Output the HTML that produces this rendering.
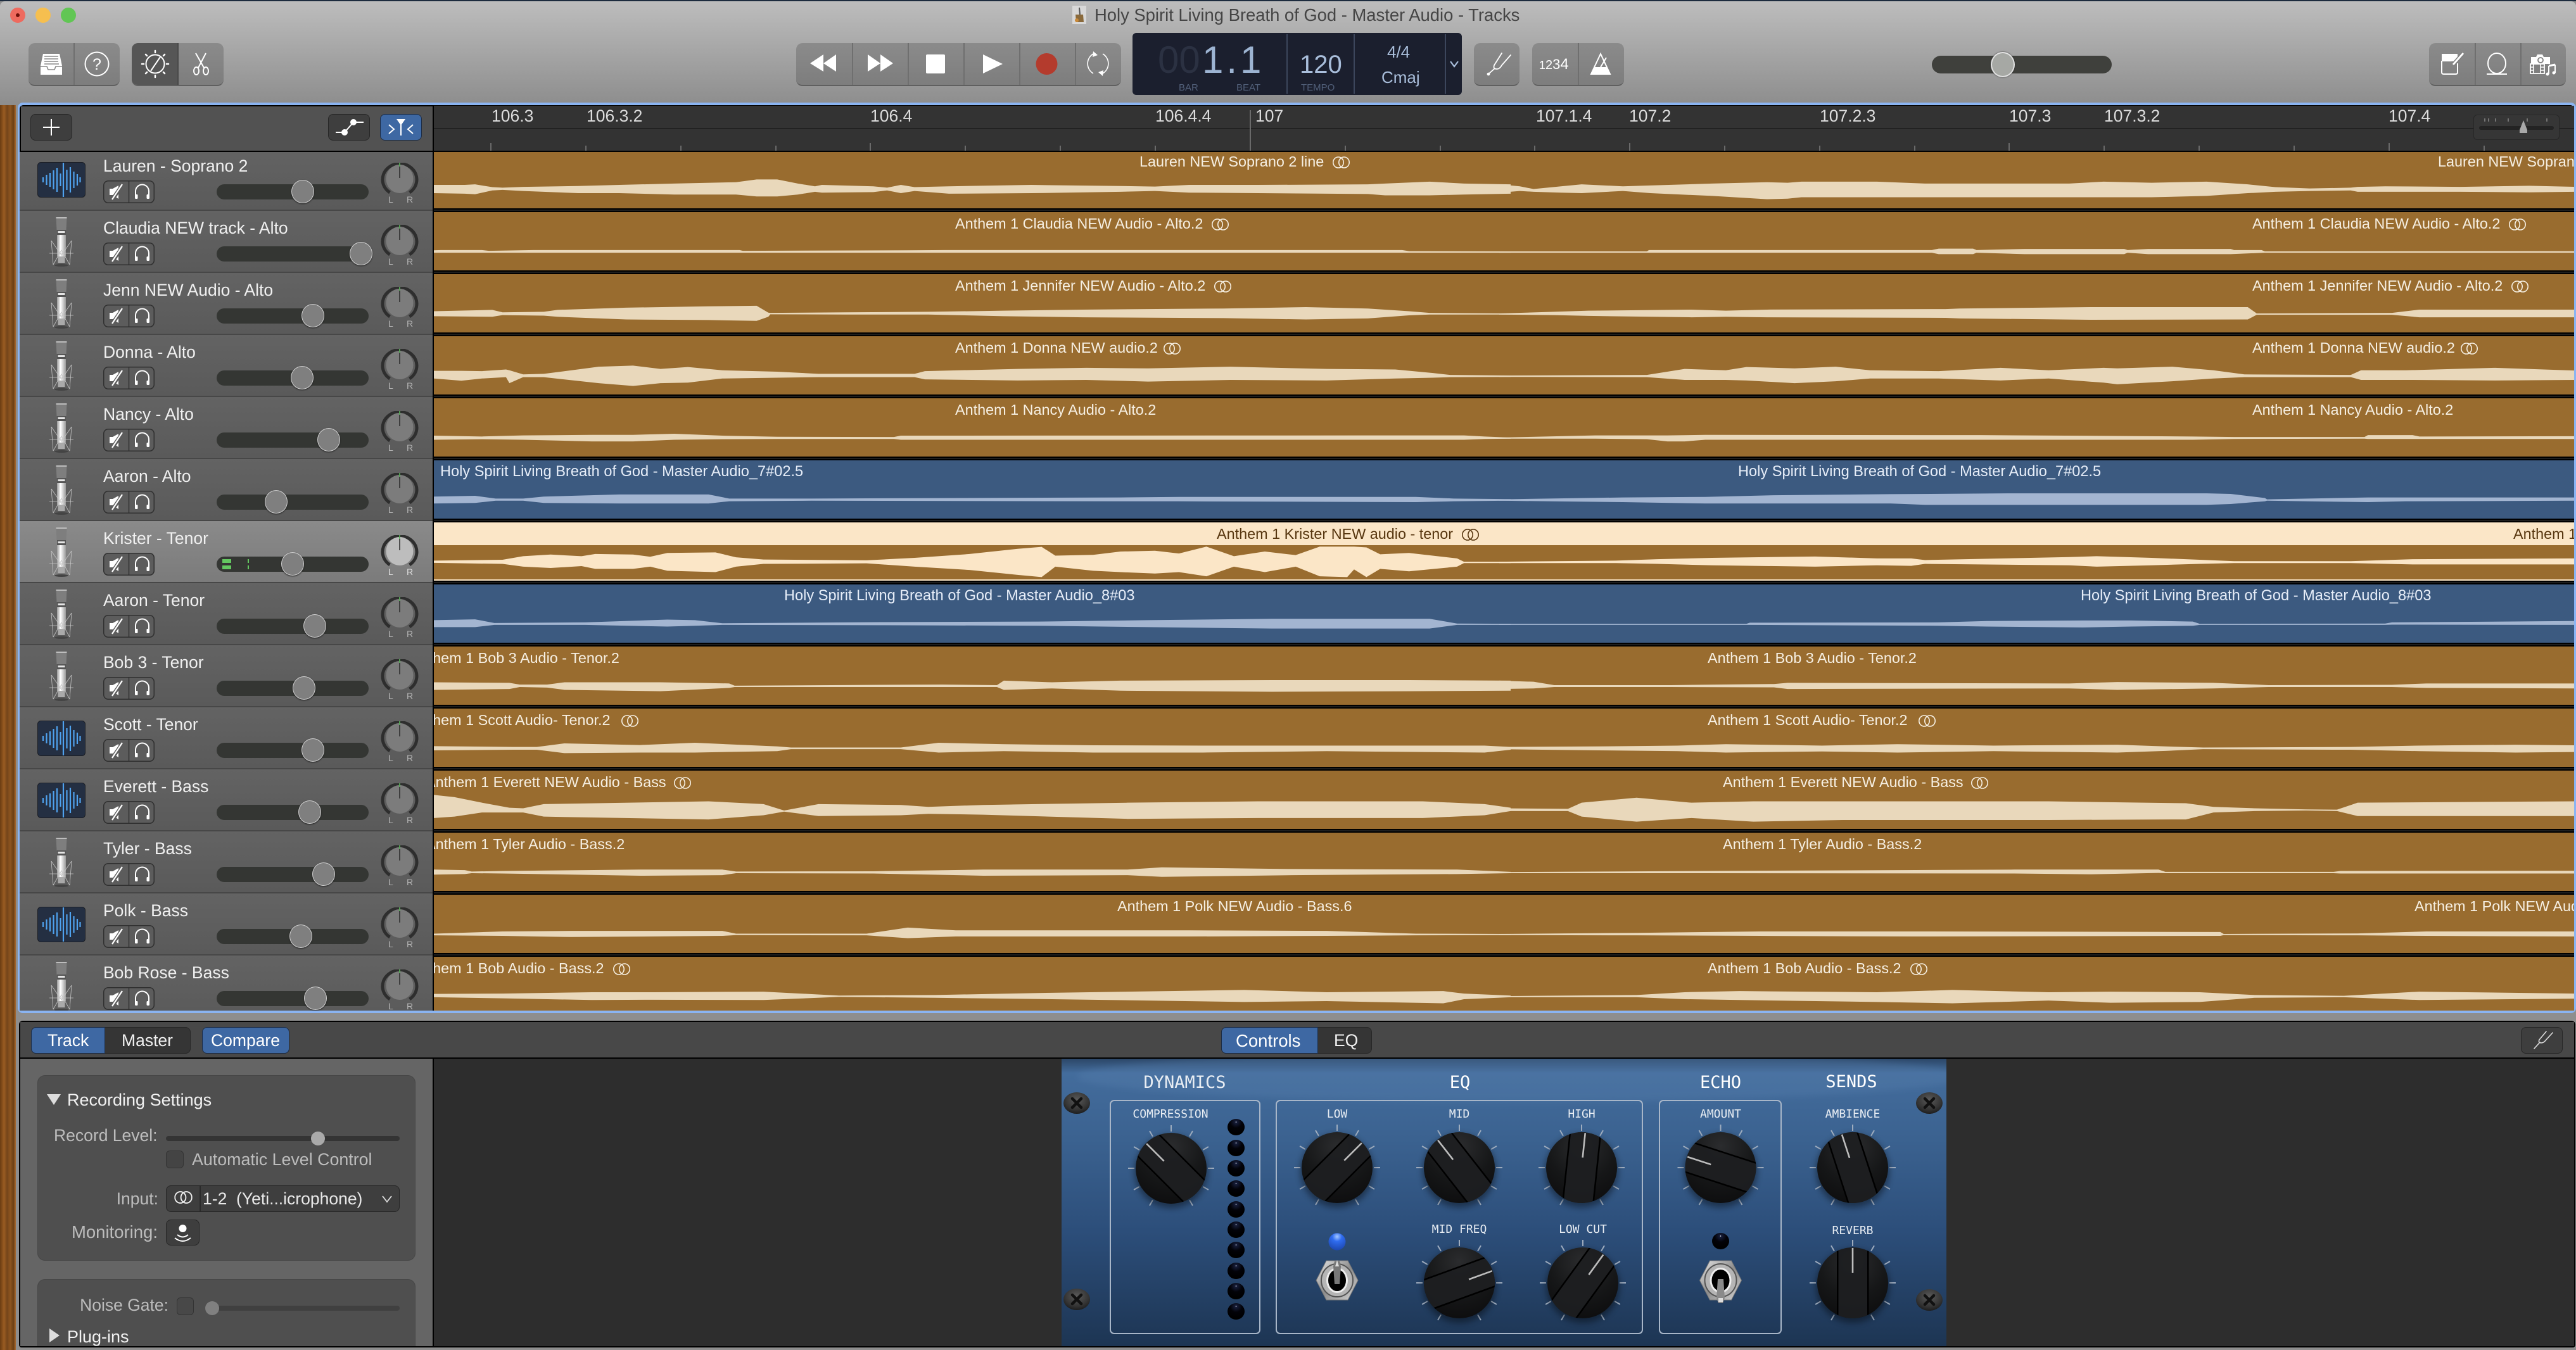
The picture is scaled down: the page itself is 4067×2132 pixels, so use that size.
<!DOCTYPE html>
<html><head><meta charset="utf-8"><title>GarageBand</title>
<style>
html,body{margin:0;padding:0;background:#8e8e8e;width:4067px;height:2132px;overflow:hidden}
body{position:relative;font-family:"Liberation Sans",sans-serif;color:#eee}
.a{position:absolute}
.t{position:absolute;white-space:nowrap;line-height:1}
.grp{position:absolute;top:68px;height:66px;background:linear-gradient(#8b8b8b,#7d7d7d);border-radius:10px;border-bottom:2px solid #5f5f5f;overflow:hidden}
.dv{position:absolute;top:0;bottom:0;width:2px;background:#6f6f6f}
.dk{position:absolute;background:#3e3e3e;border:1.5px solid #272727;border-radius:8px;box-sizing:border-box}
.bl{position:absolute;background:#3e68a3;border:1.5px solid #1d2c44;border-radius:8px;box-sizing:border-box}
#rows{position:absolute;left:31px;top:240px;width:652px;height:1356px;overflow:hidden}
.r{position:absolute;left:0;width:652px;height:96px;border-bottom:2px solid #474747;background:linear-gradient(#636363,#5a5a5a)}
.r.s{background:linear-gradient(#8a8a8a,#7b7b7b)}
.n{position:absolute;left:132px;top:14px;font-size:26.5px;line-height:1;white-space:nowrap;color:#f0f0f0}
.sl{position:absolute;left:311px;top:56px;width:240px;height:24px;border-radius:12px;background:#343633}
.th{position:absolute;top:49px;width:36px;height:37px;box-sizing:border-box;border-radius:50%;background:#7f7f7f;border:1.5px solid #cfcfcf;box-shadow:0 1px 2px #222}
.ms{position:absolute;left:132px;top:50px;width:81px;height:36px}
.pn{position:absolute;left:570px;top:22px;width:60px;height:76px}
.ic{position:absolute}
#clips{position:absolute;left:685px;top:240px;width:3379px;height:1356px;overflow:hidden;background:repeating-linear-gradient(#000 0,#000 91px,#1e1e1e 91px,#1e1e1e 93px,#000 93px,#000 98px)}
.c{position:absolute;left:0;width:3379px;height:92px;background:#996c2f;overflow:hidden}
.c.b{background:#3c5a80}
.c.k{background:#996c2f}
.l{position:absolute;top:7px;font-size:23.4px;line-height:1;white-space:nowrap;color:#f6efe2}
.c.b .l{color:#e6edf8;font-size:23.6px}
.c.k .l{color:#57360f}
.l svg{width:27px;height:19px;vertical-align:-3px;margin-left:14px;fill:none;stroke:currentColor;stroke-width:1.6}
.ru{position:absolute;top:170px;font-size:26.5px;line-height:1;color:#dcdcdc;white-space:nowrap}
.g{color:#bcbcbc}
</style></head><body>
<svg width="0" height="0" style="position:absolute"><defs>
<linearGradient id="sil" x1="0" x2="1" y1="0" y2="0"><stop offset="0" stop-color="#999"/><stop offset=".4" stop-color="#fff"/><stop offset="1" stop-color="#999"/></linearGradient>
<symbol id="mic" viewBox="0 0 40 78">
<path d="M11.500 0H28.500L27.500 20H12.500Z" fill="#7e7e7e"/><path d="M11.500 0H28.500V2H11.500Z" fill="#bdbdbd"/>
<rect x="13" y="20" width="14" height="8" fill="#555"/><rect x="14.500" y="22" width="11" height="3" fill="#e5e5e5"/>
<rect x="13" y="28" width="14" height="34" fill="url(#sil)"/>
<path d="M4 37L20 60 36 37M4 37L7 75M36 37L33 75M7 75L20 52 33 75M1 57H39" stroke="#c4c4c4" stroke-width=".8" fill="none"/>
<rect x="14.500" y="62" width="11" height="10" fill="#aaa"/><ellipse cx="20" cy="76" rx="11" ry="2" fill="#444"/>
</symbol>
<symbol id="wav" viewBox="0 0 76 56">
<rect x=".5" y=".5" width="75" height="55" rx="5" fill="#242f42" stroke="#1c1f26"/>
<path d="M9 24V32M14.500 20V36M20 17V39M25.500 13V43M31 9V47M36.500 18V38M41 1V55M46.500 12V44M52 8V48M57.500 15V41M63 19V37M67.500 24V32" stroke="#4fa2ee" stroke-width="2.200" fill="none"/>
</symbol>
<symbol id="msb" viewBox="0 0 81 36">
<rect x=".75" y=".75" width="79.500" height="34.500" rx="7" fill="#5c5c5c" stroke="#303030" stroke-width="1.500"/><path d="M40.500 1V35" stroke="#303030" stroke-width="1.500"/>
<path d="M10 13H15L24 8V29L15 23H10Z" fill="#fff"/><path d="M31 6L13 32" stroke="#5c5c5c" stroke-width="6"/><path d="M30 6L14 30" stroke="#fff" stroke-width="2.200"/>
<path d="M51 24V17A10.500 10.500 0 0 1 72 17V24" fill="none" stroke="#fff" stroke-width="2"/><rect x="50" y="22" width="4.500" height="7" rx="1.500" fill="#fff"/><rect x="68.500" y="22" width="4.500" height="7" rx="1.500" fill="#fff"/>
</symbol>
<symbol id="pan" viewBox="0 0 60 76">
<path d="M14.500 47A27 25 0 1 1 45.500 47" fill="none" stroke="#2e2e2e" stroke-width="5"/>
<ellipse cx="30" cy="25.500" rx="21.500" ry="22.500" fill="#7c7c7c"/>
<path d="M30 3V24" stroke="#2a2a2a" stroke-width="1.500"/><path d="M30 0V6" stroke="#5bc05b" stroke-width="1.500"/>
<text x="12" y="63" font-size="14" fill="#b3b3b3" font-family="Liberation Sans">L</text><text x="41" y="63" font-size="14" fill="#b3b3b3" font-family="Liberation Sans">R</text>
</symbol>
<symbol id="pans" viewBox="0 0 60 76">
<path d="M14.500 47A27 25 0 1 1 45.500 47" fill="none" stroke="#2e2e2e" stroke-width="5"/>
<ellipse cx="30" cy="25.500" rx="21.500" ry="22.500" fill="#bdbdbd"/>
<path d="M30 3V24" stroke="#2a2a2a" stroke-width="1.500"/><path d="M30 0V6" stroke="#5bc05b" stroke-width="1.500"/>
<text x="12" y="63" font-size="14" fill="#dedede" font-family="Liberation Sans">L</text><text x="41" y="63" font-size="14" fill="#dedede" font-family="Liberation Sans">R</text>
</symbol>
<symbol id="st" viewBox="0 0 27 19"><ellipse cx="9" cy="9.500" rx="8.200" ry="8.500"/><ellipse cx="18" cy="9.500" rx="8.200" ry="8.500"/></symbol>
</defs></svg>

<!-- title bar -->
<div class="a" style="left:0;top:0;width:4067px;height:2px;background:#1c2b3e"></div>
<div class="a" style="left:0;top:2px;width:4067px;height:164px;background:linear-gradient(#bdbdbd,#8d8d8d);border-radius:8px 8px 0 0"></div>
<div class="a" style="left:16px;top:12px;width:24px;height:24px;border-radius:50%;background:#ee6a5e"></div>
<div class="a" style="left:25px;top:21px;width:6px;height:6px;border-radius:50%;background:#6e0f08"></div>
<div class="a" style="left:56px;top:12px;width:24px;height:24px;border-radius:50%;background:#f6bf4f"></div>
<div class="a" style="left:96px;top:12px;width:24px;height:24px;border-radius:50%;background:#61c654"></div>
<svg class="a" style="left:1693px;top:9px" width="22" height="29" viewBox="0 0 22 29"><rect width="22" height="29" fill="#d8d8d8"/><path d="M11 3L12 14" stroke="#555" stroke-width="2"/><path d="M5 14H17L18 26H6Z" fill="#8a6a3c"/><circle cx="7" cy="23" r="3" fill="#c98a3a"/></svg>
<div class="t" style="left:1728px;top:10px;font-size:27.4px;color:#454545">Holy Spirit Living Breath of God - Master Audio - Tracks</div>

<!-- toolbar left -->
<div class="grp" style="left:45px;width:144px"><div class="dv" style="left:71px"></div></div>
<div class="grp" style="left:208px;width:145px"><div class="a" style="left:0;top:0;width:73px;height:66px;background:#565656"></div><div class="dv" style="left:72px;background:#4a4a4a"></div></div>
<svg class="a" style="left:45px;top:68px" width="310" height="66" viewBox="45 68 310 66" fill="none" stroke="#fff">
<path d="M68 85H94L98 104V118H64V104Z" fill="#fff" stroke="none"/><path d="M70 89H92M70 93H92M70 97H92M70 101H93" stroke="#8a8a8a" stroke-width="1.600"/><path d="M64 105H74L76 110H86L88 105H98" stroke="#8a8a8a" stroke-width="1.600"/>
<circle cx="153" cy="101" r="18.500" stroke-width="2"/><text x="153" y="110" font-size="25" text-anchor="middle" fill="#fff" stroke="none" font-family="Liberation Sans">?</text>
<circle cx="245" cy="101" r="14.500" stroke-width="2"/><path d="M253 90L238 112" stroke-width="2"/>
<path d="M245 80V83M245 119V122M224 101H227M263 101H266M230 86L232 88M258 88L260 86M230 116L232 114M258 114L260 116" stroke-width="2.500" stroke-linecap="round"/>
<path d="M309 84L322 107M325 84L313 107" stroke-width="2"/><ellipse cx="310" cy="112" rx="4" ry="6" stroke-width="2"/><ellipse cx="325" cy="112" rx="4" ry="6" stroke-width="2"/>
</svg>

<!-- transport -->
<div class="grp" style="left:1257px;width:513px">
<div class="dv" style="left:88px"></div><div class="dv" style="left:176px"></div><div class="dv" style="left:264px"></div><div class="dv" style="left:352px"></div><div class="dv" style="left:440px"></div></div>
<svg class="a" style="left:1257px;top:68px" width="513" height="66" viewBox="1257 68 513 66">
<path d="M1279 100L1300 86V113ZM1300 100L1320 86V113Z" fill="#fff"/>
<path d="M1410 100L1390 86V113ZM1390 100L1370 86V113Z" fill="#fff"/>
<rect x="1462" y="86" width="30" height="30" rx="2" fill="#fff"/>
<path d="M1552 86L1583 101L1552 116Z" fill="#fff"/>
<circle cx="1652.500" cy="101" r="17" fill="#b43b2d"/>
<path d="M1726 85A18 18 0 0 0 1726 116M1741 116A18 18 0 0 0 1741 85" fill="none" stroke="#fff" stroke-width="1.600"/><path d="M1726 81L1733 87L1725 90ZM1741 120L1734 114L1742 111Z" fill="#fff"/>
</svg>

<!-- LCD -->
<div class="a" style="left:1788px;top:52px;width:520px;height:98px;background:#1b1f2e;border-radius:6px"></div>
<div class="a" style="left:2031px;top:54px;width:2px;height:94px;background:#3c465c"></div>
<div class="a" style="left:2137px;top:54px;width:2px;height:94px;background:#3c465c"></div>
<div class="a" style="left:2281px;top:54px;width:2px;height:94px;background:#3c465c"></div>
<div class="t" style="left:1828px;top:65px;font-size:60px;color:#2b3142">00</div>
<div class="t" style="left:1898px;top:65px;font-size:60px;color:#9db4d2;letter-spacing:5px">1.1</div>
<div class="t" style="left:1861px;top:131px;font-size:15px;color:#52607a">BAR</div>
<div class="t" style="left:1952px;top:131px;font-size:15px;color:#52607a">BEAT</div>
<div class="t" style="left:2054px;top:131px;font-size:15px;color:#52607a">TEMPO</div>
<div class="t" style="left:2052px;top:82px;font-size:40px;color:#a9bedb">120</div>
<div class="t" style="left:2190px;top:69px;font-size:26px;color:#a9bedb">4/4</div>
<div class="t" style="left:2181px;top:109px;font-size:26px;color:#a9bedb">Cmaj</div>
<svg class="a" style="left:2288px;top:95px" width="16" height="12" viewBox="0 0 16 12"><path d="M2 2L8 10L14 2" fill="none" stroke="#a9bedb" stroke-width="2.200"/></svg>

<div class="grp" style="left:2327px;width:72px"></div>
<svg class="a" style="left:2327px;top:68px" width="72" height="66" viewBox="2327 68 72 66" fill="none" stroke="#fff" stroke-width="1.800"><path d="M2371 84L2359 103Q2357 109 2363 109Q2368 109 2371 103L2385 87M2360 108L2351 116" stroke-linecap="round"/><circle cx="2350" cy="117" r="1.500" fill="#fff"/></svg>
<div class="grp" style="left:2419px;width:145px"><div class="dv" style="left:72px"></div></div>
<div class="t" style="left:2430px;top:90px;color:#fff;white-space:nowrap"><span style="font-size:18px">1</span><span style="font-size:20px">2</span><span style="font-size:22px">3</span><span style="font-size:24px">4</span></div>
<svg class="a" style="left:2492px;top:68px" width="72" height="66" viewBox="2492 68 72 66"><path d="M2527 85L2512 117H2542Z" fill="none" stroke="#fff" stroke-width="2"/><path d="M2517 106H2537L2543 118H2511Z" fill="#fff"/><path d="M2527 106L2536 91" stroke="#fff" stroke-width="2"/></svg>

<!-- view slider -->
<div class="a" style="left:3050px;top:88px;width:284px;height:28px;border-radius:14px;background:#3f403c"></div>
<div class="a" style="left:3143px;top:82px;width:38px;height:40px;box-sizing:border-box;border-radius:50%;background:#a6a8a4;border:2px solid #e3e3e3;box-shadow:0 0 2px #333"></div>

<div class="grp" style="left:3835px;width:216px"><div class="dv" style="left:72px"></div><div class="dv" style="left:144px"></div></div>
<svg class="a" style="left:3835px;top:68px" width="216" height="66" viewBox="3835 68 216 66" fill="none" stroke="#fff" stroke-width="2">
<path d="M3855 85H3880V96L3868 97L3855 97Z" fill="#fff" stroke="none"/><path d="M3855 96V114Q3855 117 3858 117H3877Q3880 117 3880 114V100"/><path d="M3889 84L3873 102" stroke="#7f7f7f" stroke-width="6"/><path d="M3889 84L3873 102" stroke-width="3"/>
<ellipse cx="3942" cy="100" rx="14" ry="16"/><path d="M3926 117H3958"/>
<path d="M3996 90H4004L4006 86H4014L4016 90H4026V101H3996Z" fill="#fff" stroke="none"/><circle cx="4011" cy="95" r="4" stroke="#7f7f7f" stroke-width="1.800"/><rect x="3995" y="101" width="22" height="15" fill="#7f7f7f" stroke-width="1.800"/><path d="M4000 101V116M4011 101V116M3995 106H4000M3995 111H4000M4011 106H4017M4011 111H4017" stroke-width="1.600"/><path d="M4024 104V117M4034 102V115" stroke-width="2"/><path d="M4024 104L4034 102" stroke-width="3"/><circle cx="4022" cy="117" r="2.500" fill="#fff" stroke="none"/><circle cx="4032" cy="115" r="2.500" fill="#fff" stroke="none"/>
</svg>

<!-- wood + frame -->
<div class="a" style="left:0;top:166px;width:25px;height:1966px;background:linear-gradient(90deg,#6a3c12,#9a5c22 25%,#74451a 45%,#8e5520 65%,#6b3f14 85%,#a86a30)"></div>
<div class="a" style="left:28px;top:162px;width:4039px;height:1438px;background:#8ab4f2;border-radius:8px"></div>
<div class="a" style="left:31px;top:166px;width:4033px;height:1430px;background:#000;border-radius:6px 6px 0 0"></div>

<!-- left header -->
<div class="a" style="left:33px;top:168px;width:650px;height:70px;background:#525252"></div>
<div class="dk" style="left:48px;top:180px;width:66px;height:42px"></div>
<svg class="a" style="left:48px;top:180px" width="66" height="42" viewBox="0 0 66 42"><path d="M33 8V34M20 21H46" stroke="#fff" stroke-width="2"/></svg>
<div class="dk" style="left:518px;top:180px;width:66px;height:42px"></div>
<svg class="a" style="left:518px;top:180px" width="66" height="42" viewBox="0 0 66 42" fill="#fff"><path d="M12 29H26L40 13H56" stroke="#fff" stroke-width="2" fill="none"/><circle cx="26" cy="29" r="5"/><circle cx="40" cy="13" r="5"/></svg>
<div class="bl" style="left:600px;top:180px;width:66px;height:42px"></div>
<svg class="a" style="left:600px;top:180px" width="66" height="42" viewBox="0 0 66 42" fill="none" stroke="#fff" stroke-width="2"><path d="M26 8H40L33 18Z" fill="#fff" stroke="none"/><path d="M33 16V34M14 17L22 24L14 31M52 17L44 24L52 31"/></svg>

<!-- ruler -->
<div class="a" style="left:685px;top:167px;width:3379px;height:71px;background:#333"></div>
<div class="a" style="left:685px;top:202px;width:3379px;height:2px;background:#222"></div>
<svg class="a" style="left:685px;top:167px" width="3379" height="71" viewBox="685 167 3379 71" fill="none" stroke="#6a6a6a" stroke-width="2">
<path d="M775 226V238M925 230V238M1075 230V238M1225 230V238M1374 226V238M1524 230V238M1674 230V238M1824 230V238M1974 174V238M2124 230V238M2274 230V238M2423 230V238M2573 226V238M2723 230V238M2873 230V238M3023 230V238M3172 226V238M3322 230V238M3472 230V238M3622 230V238M3772 226V238M3922 230V238"/>
</svg>
<div class="ru" style="left:776px">106.3</div><div class="ru" style="left:926px">106.3.2</div><div class="ru" style="left:1374px">106.4</div><div class="ru" style="left:1824px">106.4.4</div><div class="ru" style="left:1982px">107</div><div class="ru" style="left:2425px">107.1.4</div><div class="ru" style="left:2572px">107.2</div><div class="ru" style="left:2873px">107.2.3</div><div class="ru" style="left:3172px">107.3</div><div class="ru" style="left:3322px">107.3.2</div><div class="ru" style="left:3771px">107.4</div>
<div class="a" style="left:3905px;top:181px;width:136px;height:40px;background:#363636;border:1.5px solid #272727;border-radius:6px;box-sizing:border-box"></div>
<svg class="a" style="left:3905px;top:181px" width="136" height="40" viewBox="0 0 136 40"><rect x="9" y="18" width="118" height="6" rx="3" fill="#232323"/><path d="M18 6V11M24 6V11M35 6V11M55 6V11M85 6V11M116 6V11" stroke="#888" stroke-width="1.500"/><path d="M79 9L85 24V29H73V24Z" fill="#a8a8a8"/></svg>

<!-- tracks -->
<div id="rows">
<div class="r" style="top:-5px"><svg class="ic" style="left:28px;top:21px" width="76" height="56"><use href="#wav"/></svg><div class="n">Lauren - Soprano 2</div><svg class="ms"><use href="#msb"/></svg><div class="sl"></div><div class="th" style="left:429px"></div><svg class="pn"><use href="#pan"/></svg></div>
<div class="r" style="top:93px"><svg class="ic" style="left:46px;top:10px" width="40" height="78"><use href="#mic"/></svg><div class="n">Claudia NEW track - Alto</div><svg class="ms"><use href="#msb"/></svg><div class="sl"></div><div class="th" style="left:521px"></div><svg class="pn"><use href="#pan"/></svg></div>
<div class="r" style="top:191px"><svg class="ic" style="left:46px;top:10px" width="40" height="78"><use href="#mic"/></svg><div class="n">Jenn NEW Audio - Alto</div><svg class="ms"><use href="#msb"/></svg><div class="sl"></div><div class="th" style="left:445px"></div><svg class="pn"><use href="#pan"/></svg></div>
<div class="r" style="top:289px"><svg class="ic" style="left:46px;top:10px" width="40" height="78"><use href="#mic"/></svg><div class="n">Donna - Alto</div><svg class="ms"><use href="#msb"/></svg><div class="sl"></div><div class="th" style="left:428px"></div><svg class="pn"><use href="#pan"/></svg></div>
<div class="r" style="top:387px"><svg class="ic" style="left:46px;top:10px" width="40" height="78"><use href="#mic"/></svg><div class="n">Nancy - Alto</div><svg class="ms"><use href="#msb"/></svg><div class="sl"></div><div class="th" style="left:470px"></div><svg class="pn"><use href="#pan"/></svg></div>
<div class="r" style="top:485px"><svg class="ic" style="left:46px;top:10px" width="40" height="78"><use href="#mic"/></svg><div class="n">Aaron - Alto</div><svg class="ms"><use href="#msb"/></svg><div class="sl"></div><div class="th" style="left:387px"></div><svg class="pn"><use href="#pan"/></svg></div>
<div class="r s" style="top:583px"><svg class="ic" style="left:46px;top:10px" width="40" height="78"><use href="#mic"/></svg><div class="n">Krister - Tenor</div><svg class="ms"><use href="#msb"/></svg><div class="sl"></div><div class="a" style="left:320px;top:60px;width:14px;height:6px;background:#63c760"></div><div class="a" style="left:320px;top:70px;width:14px;height:6px;background:#63c760"></div><div class="a" style="left:360px;top:60px;width:2px;height:6px;background:#63c760"></div><div class="a" style="left:360px;top:70px;width:2px;height:6px;background:#63c760"></div><div class="th" style="left:413px"></div><svg class="pn"><use href="#pans"/></svg></div>
<div class="r" style="top:681px"><svg class="ic" style="left:46px;top:10px" width="40" height="78"><use href="#mic"/></svg><div class="n">Aaron - Tenor</div><svg class="ms"><use href="#msb"/></svg><div class="sl"></div><div class="th" style="left:448px"></div><svg class="pn"><use href="#pan"/></svg></div>
<div class="r" style="top:779px"><svg class="ic" style="left:46px;top:10px" width="40" height="78"><use href="#mic"/></svg><div class="n">Bob 3 - Tenor</div><svg class="ms"><use href="#msb"/></svg><div class="sl"></div><div class="th" style="left:431px"></div><svg class="pn"><use href="#pan"/></svg></div>
<div class="r" style="top:877px"><svg class="ic" style="left:28px;top:21px" width="76" height="56"><use href="#wav"/></svg><div class="n">Scott - Tenor</div><svg class="ms"><use href="#msb"/></svg><div class="sl"></div><div class="th" style="left:445px"></div><svg class="pn"><use href="#pan"/></svg></div>
<div class="r" style="top:975px"><svg class="ic" style="left:28px;top:21px" width="76" height="56"><use href="#wav"/></svg><div class="n">Everett - Bass</div><svg class="ms"><use href="#msb"/></svg><div class="sl"></div><div class="th" style="left:440px"></div><svg class="pn"><use href="#pan"/></svg></div>
<div class="r" style="top:1073px"><svg class="ic" style="left:46px;top:10px" width="40" height="78"><use href="#mic"/></svg><div class="n">Tyler - Bass</div><svg class="ms"><use href="#msb"/></svg><div class="sl"></div><div class="th" style="left:462px"></div><svg class="pn"><use href="#pan"/></svg></div>
<div class="r" style="top:1171px"><svg class="ic" style="left:28px;top:21px" width="76" height="56"><use href="#wav"/></svg><div class="n">Polk - Bass</div><svg class="ms"><use href="#msb"/></svg><div class="sl"></div><div class="th" style="left:426px"></div><svg class="pn"><use href="#pan"/></svg></div>
<div class="r" style="top:1269px"><svg class="ic" style="left:46px;top:10px" width="40" height="78"><use href="#mic"/></svg><div class="n">Bob Rose - Bass</div><svg class="ms"><use href="#msb"/></svg><div class="sl"></div><div class="th" style="left:449px"></div><svg class="pn"><use href="#pan"/></svg></div>
</div>

<div id="clips">
<div class="c" style="top:0;height:89px"><div class="l" style="left:1114px;top:4px">Lauren NEW Soprano 2 line<svg viewBox="0 0 27 19"><use href="#st"/></svg></div><div class="l" style="left:3164px;top:4px">Lauren NEW Soprano 2 line</div></div>
<div class="c" style="top:95px"><div class="l" style="left:823px">Anthem 1 Claudia NEW Audio - Alto.2<svg viewBox="0 0 27 19"><use href="#st"/></svg></div><div class="l" style="left:2871px">Anthem 1 Claudia NEW Audio - Alto.2<svg viewBox="0 0 27 19"><use href="#st"/></svg></div></div>
<div class="c" style="top:193px"><div class="l" style="left:823px">Anthem 1 Jennifer NEW Audio - Alto.2<svg viewBox="0 0 27 19"><use href="#st"/></svg></div><div class="l" style="left:2871px">Anthem 1 Jennifer NEW Audio - Alto.2<svg viewBox="0 0 27 19"><use href="#st"/></svg></div></div>
<div class="c" style="top:291px"><div class="l" style="left:823px">Anthem 1 Donna NEW audio.2<svg viewBox="0 0 27 19" style="margin-left:9px"><use href="#st"/></svg></div><div class="l" style="left:2871px">Anthem 1 Donna NEW audio.2<svg viewBox="0 0 27 19" style="margin-left:9px"><use href="#st"/></svg></div></div>
<div class="c" style="top:389px"><div class="l" style="left:823px">Anthem 1 Nancy Audio - Alto.2</div><div class="l" style="left:2871px">Anthem 1 Nancy Audio - Alto.2</div></div>
<div class="c b" style="top:487px"><div class="l" style="left:10px">Holy Spirit Living Breath of God - Master Audio_7#02.5</div><div class="l" style="left:2059px">Holy Spirit Living Breath of God - Master Audio_7#02.5</div></div>
<div class="c k" style="top:585px"><div class="a" style="left:0;top:0;width:3379px;height:36px;background:#fbe6c7"></div><div class="a" style="left:0;top:90px;width:3379px;height:2px;background:#fbe6c7"></div><div class="l" style="left:1236px">Anthem 1 Krister NEW audio - tenor<svg viewBox="0 0 27 19"><use href="#st"/></svg></div><div class="l" style="left:3283px">Anthem 1 Krister NEW audio - tenor</div></div>
<div class="c b" style="top:683px"><div class="l" style="left:553px">Holy Spirit Living Breath of God - Master Audio_8#03</div><div class="l" style="left:2600px">Holy Spirit Living Breath of God - Master Audio_8#03</div></div>
<div class="c" style="top:781px"><div class="l" style="left:-37px">Anthem 1 Bob 3 Audio - Tenor.2</div><div class="l" style="left:2011px">Anthem 1 Bob 3 Audio - Tenor.2</div></div>
<div class="c" style="top:879px"><div class="l" style="left:-37px">Anthem 1 Scott Audio- Tenor.2<svg viewBox="0 0 27 19" style="margin-left:17px"><use href="#st"/></svg></div><div class="l" style="left:2011px">Anthem 1 Scott Audio- Tenor.2<svg viewBox="0 0 27 19" style="margin-left:17px"><use href="#st"/></svg></div></div>
<div class="c" style="top:977px"><div class="l" style="left:-13px">Anthem 1 Everett NEW Audio - Bass<svg viewBox="0 0 27 19" style="margin-left:12px"><use href="#st"/></svg></div><div class="l" style="left:2035px">Anthem 1 Everett NEW Audio - Bass<svg viewBox="0 0 27 19" style="margin-left:12px"><use href="#st"/></svg></div></div>
<div class="c" style="top:1075px"><div class="l" style="left:-13px">Anthem 1 Tyler Audio - Bass.2</div><div class="l" style="left:2035px">Anthem 1 Tyler Audio - Bass.2</div></div>
<div class="c" style="top:1173px"><div class="l" style="left:1079px">Anthem 1 Polk NEW Audio - Bass.6</div><div class="l" style="left:3127px">Anthem 1 Polk NEW Audio - Bass.6</div></div>
<div class="c" style="top:1271px;height:92px"><div class="l" style="left:-37px">Anthem 1 Bob Audio - Bass.2<svg viewBox="0 0 27 19"><use href="#st"/></svg></div><div class="l" style="left:2011px">Anthem 1 Bob Audio - Bass.2<svg viewBox="0 0 27 19"><use href="#st"/></svg></div></div>

<svg class="a" style="left:0;top:0" width="3379" height="1356" viewBox="685 240 3379 1356">
<g transform="translate(685 240) scale(1.0842 .4337)" fill="#e9d8bb">
<path d="M0 120 45 120 60 118 85 128 100 130 130 127 210 124 270 120 350 115 440 110 470 100 500 100 530 115 555 125 565 120 640 125 660 130 680 120 700 128 750 125 870 120 1000 124 1050 126 1100 120 1200 120 1360 118 1385 115 1450 108 1500 115 1568 118 1568 152 1500 155 1450 158 1385 158 1360 153 1200 150 1100 148 1050 142 1000 145 870 150 750 152 700 142 680 150 660 140 640 146 565 148 555 145 530 155 500 162 470 162 440 155 350 155 270 150 210 150 130 142 100 138 85 140 60 154 45 152 0 150Z"/>
<path d="M0 358 10 357 70 357 80 360 145 357 445 357 450 360 690 358 745 357 1410 357 1420 361 1568 362 1568 367 0 367Z"/>
<path d="M0 580 85 575 100 584 160 582 180 575 280 567 400 562 470 560 487 585 490 586 600 584 720 582 830 578 945 574 1150 570 1270 565 1360 570 1420 580 1450 586 1568 588 1568 592 1450 592 1420 595 1360 606 1270 610 1150 605 945 602 830 598 720 592 600 592 490 591 487 600 470 615 400 612 280 610 180 600 160 596 100 594 85 600 0 598Z"/>
<path d="M0 797 40 797 70 798 105 792 110 795 130 810 160 808 240 782 290 778 330 790 370 783 420 795 500 800 560 808 700 808 715 798 850 790 950 786 1040 788 1160 782 1300 790 1400 792 1455 805 1480 812 1568 814 1568 819 1480 820 1455 822 1400 825 1300 832 1160 830 1040 836 950 830 850 832 715 828 700 820 560 820 500 822 420 825 370 840 330 842 290 852 240 842 160 820 130 820 110 842 105 820 70 825 40 833 0 825Z"/>
<path d="M0 1033 70 1036 130 1032 230 1030 290 1030 350 1026 420 1033 500 1037 670 1038 680 1033 1500 1032 1530 1036 1568 1040 1568 1044 1530 1045 1500 1048 680 1048 670 1045 500 1045 420 1046 350 1048 290 1054 230 1054 130 1048 70 1046 0 1048Z"/>
<path fill="#a3b5d1" d="M0 1255 60 1252 90 1262 130 1262 160 1255 270 1247 400 1247 430 1262 550 1262 1000 1258 1085 1256 1430 1256 1485 1262 1568 1264 1568 1270 1485 1272 1430 1275 1085 1272 1000 1272 550 1270 430 1272 400 1280 270 1280 160 1278 130 1270 90 1270 60 1278 0 1280Z"/>
<path fill="#fbe6c7" d="M0 1488 100 1485 130 1472 170 1466 215 1472 235 1464 290 1466 315 1474 340 1460 410 1458 440 1476 480 1484 630 1487 700 1478 780 1464 850 1445 885 1438 905 1470 960 1467 1000 1455 1050 1452 1085 1462 1125 1437 1165 1472 1210 1455 1255 1468 1290 1437 1340 1437 1358 1440 1378 1465 1420 1460 1490 1480 1500 1492 1568 1492 1568 1497 1500 1497 1490 1510 1420 1527 1378 1518 1358 1548 1340 1520 1330 1548 1290 1545 1255 1510 1210 1530 1165 1510 1125 1545 1085 1530 1050 1535 1000 1530 960 1525 905 1510 885 1548 850 1540 780 1522 700 1510 630 1498 480 1500 440 1510 410 1530 340 1525 315 1510 290 1518 235 1518 215 1508 170 1515 130 1510 100 1500 0 1496Z"/>
</g>
<g transform="translate(2367 240) scale(1.0842 .4337)" fill="#e9d8bb">
<path d="M0 118 30 125 50 135 90 125 120 118 180 125 220 122 310 115 390 110 420 112 440 108 550 108 620 115 830 115 880 108 950 112 1030 108 1090 118 1130 128 1180 133 1240 130 1250 127 1290 125 1400 127 1500 123 1568 127 1568 145 1500 147 1400 145 1290 145 1250 145 1240 140 1180 142 1130 145 1090 150 1030 160 950 165 880 165 620 165 550 165 440 165 420 170 390 172 310 160 220 150 180 142 120 150 90 148 50 145 30 142 0 148Z"/>
<path d="M0 362 215 362 218 357 630 357 640 352 690 352 695 357 765 353 910 353 915 357 945 353 1065 353 1070 357 1110 357 1115 362 1568 361 1568 367 1115 367 1065 372 945 372 915 367 910 372 765 372 695 367 690 372 640 372 630 367 0 367Z"/>
<path d="M0 588 80 582 130 578 280 574 330 578 390 574 650 572 670 570 860 565 1090 565 1103 588 1300 586 1340 574 1568 574 1568 602 1340 602 1300 593 1103 593 1090 610 860 611 670 606 650 604 390 602 330 600 280 602 130 597 80 594 0 592Z"/>
<path d="M0 814 215 812 270 790 330 795 360 783 430 788 490 782 540 795 640 798 730 786 800 795 880 786 900 788 980 782 1040 795 1085 810 1240 812 1255 795 1320 795 1450 786 1568 796 1568 830 1450 832 1320 830 1255 830 1240 820 1085 820 1040 825 980 835 900 846 880 840 800 825 730 832 640 825 540 825 490 835 430 842 360 832 330 830 270 830 215 820 0 819Z"/>
<path d="M0 1040 140 1032 215 1032 245 1032 300 1030 700 1031 1010 1036 1070 1038 1260 1038 1265 1031 1330 1031 1340 1036 1568 1035 1568 1045 1340 1045 1330 1045 1265 1045 1260 1044 1070 1045 1010 1048 700 1048 300 1048 270 1054 245 1054 215 1046 140 1044 0 1044Z"/>
<path fill="#a3b5d1" d="M0 1265 180 1258 300 1256 400 1250 570 1246 740 1243 1030 1243 1065 1245 1115 1260 1118 1265 1265 1258 1320 1258 1568 1258 1568 1270 1320 1272 1265 1275 1118 1270 1115 1272 1065 1282 1030 1285 620 1285 570 1280 300 1280 180 1275 0 1270Z"/>
<path fill="#fbe6c7" d="M0 1492 170 1488 230 1483 310 1478 460 1473 550 1480 600 1480 620 1486 830 1475 870 1472 950 1478 1020 1485 1070 1490 1240 1490 1330 1483 1568 1480 1568 1502 1330 1502 1240 1497 1070 1497 1020 1500 950 1505 870 1510 830 1505 620 1500 600 1507 550 1505 460 1510 310 1505 230 1500 170 1497 0 1497Z"/>
</g>
<g transform="translate(685 920) scale(1.0842 .4401)" fill="#e9d8bb">
<path fill="#a3b5d1" d="M0 135 60 132 88 145 220 143 340 133 380 135 420 146 650 142 880 140 1040 135 1220 130 1450 130 1490 147 1568 148 1568 152 1490 152 1450 165 1280 165 1220 165 1040 160 880 155 650 153 420 152 380 155 340 158 220 152 88 152 60 160 0 160Z"/>
<path d="M0 358 110 360 125 366 165 366 190 358 330 358 430 362 438 370 740 366 820 368 830 352 900 358 1000 352 1220 350 1420 350 1568 352 1568 388 1420 390 1220 392 1000 388 900 380 830 385 820 375 740 375 438 375 430 378 330 390 190 385 165 377 125 375 110 382 0 385Z"/>
<path d="M0 587 115 590 150 590 190 577 300 583 380 575 500 588 520 592 680 592 735 575 830 580 960 584 1120 585 1300 585 1530 585 1568 590 1568 600 1530 610 1300 605 1120 610 960 610 830 605 735 610 680 598 520 598 500 605 380 610 300 610 190 612 150 600 115 600 0 602Z"/>
<path d="M0 762 30 770 70 790 110 808 130 810 160 795 400 785 480 795 510 818 560 795 680 798 720 805 800 798 1010 790 1200 785 1440 785 1530 795 1568 808 1568 820 1530 835 1440 845 1200 845 1010 848 800 833 720 830 680 835 560 838 510 822 480 835 400 850 160 840 130 825 110 825 70 825 30 840 0 845Z"/>
<path d="M0 1030 45 1032 55 1037 100 1035 300 1030 420 1030 440 1037 640 1036 800 1030 1010 1030 1060 1022 1250 1028 1490 1030 1568 1038 1568 1043 1490 1046 1250 1050 1060 1056 1010 1050 800 1052 640 1044 440 1043 420 1050 300 1052 100 1044 55 1043 45 1046 0 1048Z"/>
<path d="M0 1260 100 1252 200 1250 420 1250 440 1260 630 1260 690 1238 760 1248 1100 1248 1300 1250 1430 1260 1568 1261 1568 1265 1430 1266 1300 1268 1100 1270 760 1270 690 1276 630 1266 440 1265 420 1268 200 1272 100 1268 0 1266Z"/>
<path d="M0 1476 100 1475 230 1470 320 1470 480 1468 590 1482 730 1480 900 1472 1180 1462 1300 1470 1470 1466 1500 1475 1568 1482 1568 1488 1500 1495 1470 1510 1300 1502 1180 1505 900 1495 730 1490 590 1487 480 1498 320 1497 230 1498 100 1492 0 1488Z"/>
</g>
<g transform="translate(2367 920) scale(1.0842 .4401)" fill="#e9d8bb">
<path fill="#a3b5d1" d="M0 148 360 148 365 144 640 143 710 138 850 136 920 136 1010 140 1020 148 1290 147 1300 143 1568 138 1568 152 1300 151 1290 152 1020 152 1010 155 920 158 850 161 710 158 640 155 365 152 0 152Z"/>
<path d="M0 352 50 356 80 368 250 368 400 364 420 360 830 362 900 357 1040 360 1120 368 1300 367 1350 362 1568 362 1568 380 1350 378 1300 375 1120 375 1040 380 900 385 830 380 420 382 400 376 250 375 80 375 50 380 0 382Z"/>
<path d="M0 590 145 588 260 585 330 580 470 585 580 580 720 585 900 582 970 588 1025 592 1240 590 1340 585 1480 582 1568 584 1568 608 1480 610 1340 605 1240 600 1025 598 970 604 900 610 720 605 580 610 470 606 330 610 260 605 145 602 0 598Z"/>
<path d="M0 810 100 812 120 790 200 772 280 790 370 785 500 785 800 785 1000 792 1040 805 1100 810 1175 814 1220 815 1250 790 1568 785 1568 838 1250 838 1220 820 1175 818 1100 820 1040 825 1000 850 800 852 500 852 370 858 280 845 200 858 120 840 100 820 0 820Z"/>
<path d="M0 1039 300 1035 750 1030 860 1030 960 1030 970 1038 1215 1038 1225 1035 1568 1034 1568 1044 1225 1044 1215 1043 970 1043 960 1042 860 1047 750 1044 300 1043 0 1043Z"/>
<path d="M0 1261 200 1257 380 1252 600 1252 1050 1254 1055 1261 1250 1259 1350 1252 1568 1252 1568 1270 1350 1268 1250 1266 1055 1265 1050 1268 600 1270 380 1268 200 1266 0 1265Z"/>
<path d="M0 1484 200 1480 270 1470 350 1466 550 1470 660 1462 800 1470 890 1468 1020 1470 1100 1480 1230 1483 1340 1468 1568 1475 1568 1493 1340 1498 1230 1488 1100 1490 1020 1505 890 1508 800 1500 660 1510 550 1505 350 1498 270 1495 200 1488 0 1488Z"/>
</g>
</svg>
</div>

<!-- bottom editor -->
<div class="a" style="left:30px;top:1612px;width:4036px;height:516px;background:#000;border-radius:6px 6px 4px 4px"></div>
<div class="a" style="left:32px;top:1614px;width:4032px;height:56px;background:#484848"></div>
<div class="a" style="left:32px;top:1672px;width:651px;height:454px;background:#656565"></div>
<div class="a" style="left:685px;top:1672px;width:3379px;height:454px;background:#2d2d2d"></div>

<div class="dk" style="left:49px;top:1622px;width:252px;height:42px;background:#353535"></div>
<div class="bl" style="left:49px;top:1622px;width:117px;height:42px;border-radius:8px 0 0 8px"></div>
<div class="t" style="left:75px;top:1630px;font-size:26.5px;color:#fff">Track</div>
<div class="t" style="left:192px;top:1630px;font-size:26.5px;color:#f0f0f0">Master</div>
<div class="bl" style="left:319px;top:1622px;width:138px;height:42px"></div>
<div class="t" style="left:333px;top:1630px;font-size:26.5px;color:#fff">Compare</div>

<div class="dk" style="left:1928px;top:1622px;width:238px;height:42px;background:#353535"></div>
<div class="bl" style="left:1928px;top:1622px;width:153px;height:42px;border-radius:8px 0 0 8px"></div>
<div class="t" style="left:1951px;top:1630px;font-size:27.5px;color:#fff">Controls</div>
<div class="t" style="left:2106px;top:1630px;font-size:26.5px;color:#f0f0f0">EQ</div>
<div class="dk" style="left:3980px;top:1622px;width:66px;height:42px"></div>
<svg class="a" style="left:3980px;top:1622px" width="66" height="42" viewBox="0 0 66 42" fill="none" stroke="#ddd" stroke-width="1.600"><path d="M40 7L29 20Q27 25 32 25Q36 25 39 21L50 9M30 24L21 34" stroke-linecap="round"/></svg>

<div class="a" style="left:59px;top:1698px;width:597px;height:293px;background:#4f4f4f;border:1.5px solid #474747;border-radius:12px;box-sizing:border-box"></div>
<svg class="a" style="left:74px;top:1728px" width="22" height="17"><path d="M0 0H22L11 17Z" fill="#ddd"/></svg>
<div class="t" style="left:106px;top:1724px;font-size:27px;color:#f2f2f2">Recording Settings</div>
<div class="t g" style="left:85px;top:1780px;font-size:26.5px">Record Level:</div>
<div class="a" style="left:262px;top:1794px;width:369px;height:8px;background:#343434;border-radius:4px"></div>
<div class="a" style="left:491px;top:1787px;width:22px;height:22px;border-radius:50%;background:#aaa"></div>
<div class="a" style="left:262px;top:1817px;width:28px;height:28px;background:#444;border:1.5px solid #343434;border-radius:6px;box-sizing:border-box"></div>
<div class="t g" style="left:303px;top:1818px;font-size:26.8px">Automatic Level Control</div>
<div class="t g" style="left:150px;width:100px;text-align:right;top:1880px;font-size:26.5px">Input:</div>
<div class="dk" style="left:262px;top:1872px;width:369px;height:42px"></div>
<div class="a" style="left:315px;top:1873px;width:1.5px;height:40px;background:#2a2a2a"></div>
<svg class="a" style="left:274px;top:1881px;fill:none;stroke:#eee;stroke-width:1.800" width="31" height="20" viewBox="0 0 27 19"><use href="#st"/></svg>
<div class="t" style="left:320px;top:1880px;font-size:26.5px;color:#e8e8e8;white-space:pre">1-2  (Yeti...icrophone)</div>
<svg class="a" style="left:603px;top:1888px" width="16" height="12"><path d="M1 1L8 10L15 1" fill="none" stroke="#ddd" stroke-width="1.800"/></svg>
<div class="t g" style="left:100px;width:149px;text-align:right;top:1932px;font-size:27.5px">Monitoring:</div>
<div class="dk" style="left:262px;top:1926px;width:53px;height:41px"></div>
<svg class="a" style="left:262px;top:1926px" width="53" height="41" viewBox="0 0 53 41" fill="none" stroke="#fff" stroke-width="2"><circle cx="26.500" cy="14" r="6" fill="#fff" stroke="none"/><path d="M18 24Q26.500 31 35 24M14 29Q26.500 39 39 29"/></svg>

<div class="a" style="left:59px;top:2020px;width:597px;height:106px;background:#4f4f4f;border:1.5px solid #474747;border-bottom:0;border-radius:12px 12px 0 0;box-sizing:border-box"></div>
<div class="t g" style="left:100px;width:166px;text-align:right;top:2048px;font-size:26.5px">Noise Gate:</div>
<div class="a" style="left:279px;top:2049px;width:27px;height:28px;background:#484848;border:1.5px solid #343434;border-radius:6px;box-sizing:border-box"></div>
<div class="a" style="left:324px;top:2062px;width:307px;height:8px;background:#404040;border-radius:4px"></div>
<div class="a" style="left:324px;top:2055px;width:22px;height:22px;border-radius:50%;background:#808080"></div>
<svg class="a" style="left:78px;top:2098px" width="16" height="22"><path d="M0 0V22L16 11Z" fill="#ddd"/></svg>
<div class="t" style="left:106px;top:2098px;font-size:27px;color:#f2f2f2">Plug-ins</div>

<!-- plugin -->
<svg class="a" style="left:1676px;top:1672px" width="1397" height="454" viewBox="1676 1672 1397 454" font-family="DejaVu Sans Mono" fill="#e8edf3">
<defs>
<linearGradient id="pb" x1="0" x2="0" y1="0" y2="1"><stop offset="0" stop-color="#2c4768"/><stop offset=".05" stop-color="#436c9c"/><stop offset=".28" stop-color="#3b6290"/><stop offset=".6" stop-color="#2c4e7a"/><stop offset="1" stop-color="#1d3553"/></linearGradient>
<radialGradient id="kn" cx=".5" cy=".2" r=".8"><stop offset="0" stop-color="#2b2c2e"/><stop offset=".6" stop-color="#161718"/><stop offset="1" stop-color="#0e0e0f"/></radialGradient>
<filter id="bl" x="-30%" y="-30%" width="160%" height="160%"><feGaussianBlur stdDeviation="5"/></filter>
<radialGradient id="ld" cx=".5" cy=".2" r=".7"><stop offset="0" stop-color="#1a2242"/><stop offset=".5" stop-color="#020208"/><stop offset="1" stop-color="#000"/></radialGradient>
<radialGradient id="bd" cx=".5" cy=".2" r=".8"><stop offset="0" stop-color="#a5c8ff"/><stop offset=".35" stop-color="#2f6cf0"/><stop offset="1" stop-color="#1d48b0"/></radialGradient>
<radialGradient id="sc" cx=".5" cy=".35" r=".65"><stop offset="0" stop-color="#5a5a5a"/><stop offset=".7" stop-color="#343434"/><stop offset="1" stop-color="#1e1e1e"/></radialGradient>
<linearGradient id="ns" x1="0" x2="1" y1="0" y2="1"><stop offset="0" stop-color="#e8e8e8"/><stop offset=".5" stop-color="#8c8c8c"/><stop offset="1" stop-color="#d5d5d5"/></linearGradient>
<clipPath id="kc"><circle r="56"/></clipPath>
<g id="kb"><g clip-path="url(#kc)"><rect x="-23" y="-60" width="46" height="120" fill="#1d1f21" fill-opacity=".95"/><rect x="-25" y="-60" width="2.500" height="120" fill="#000"/><rect x="23" y="-60" width="2.500" height="120" fill="#000"/></g><path d="M0 -55V-16" stroke="#bdbdbd" stroke-width="2.600"/></g>
<g id="kk"><circle cy="5" r="58" fill="#000" opacity=".4" filter="url(#bl)"/><circle r="56" fill="url(#kn)"/></g>
<g id="tk" stroke="#9fadbf" stroke-width="2" fill="none"><path d="M0 -58V-68M29 -50.200L34 -58.900M50.200 -29L58.900 -34M58 0H68M50.200 29L58.900 34M29 50.200L34 58.900M-29 50.200L-34 58.900M-50.200 29L-58.900 34M-58 0H-68M-50.200 -29L-58.900 -34M-29 -50.200L-34 -58.900"/></g>
<g id="led"><ellipse rx="13.500" ry="13" fill="url(#ld)"/><circle cy="-8" r=".8" fill="#fff"/></g>
<g id="scr"><ellipse rx="21" ry="17" fill="url(#sc)"/><path d="M-7 -7L7 7M7 -7L-7 7" stroke="#111" stroke-width="4.500" stroke-linecap="round"/></g>
<g id="hex"><polygon points="-33,0 -17,-31 17,-31 33,0 17,31 -17,31" fill="url(#ns)" stroke="#777"/><ellipse rx="25" ry="26" fill="#b5b5b5" stroke="#555" stroke-width="2"/><ellipse rx="17" ry="20" fill="#eee"/><ellipse rx="14" ry="17" fill="#000"/></g>
</defs>
<rect x="1676" y="1672" width="1397" height="454" fill="url(#pb)"/>
<ellipse cx="2400" cy="1700" rx="700" ry="40" fill="#5a82b0" opacity=".3" filter="url(#bl)"/>
<g font-size="27" text-anchor="middle"><text x="1870.500" y="1718">DYNAMICS</text><text x="2305" y="1718" fill="#fff">EQ</text><text x="2716.500" y="1718" fill="#fff">ECHO</text><text x="2923" y="1717" fill="#fff">SENDS</text></g>
<g fill="none" stroke="#a8b6c8" stroke-width="2"><rect x="1753" y="1738" width="236" height="368" rx="6"/><rect x="2015" y="1738" width="578" height="368" rx="6"/><rect x="2620" y="1738" width="192" height="368" rx="6"/></g>
<g font-size="18" text-anchor="middle"><text x="1848" y="1765">COMPRESSION</text><text x="2111" y="1765">LOW</text><text x="2304" y="1765">MID</text><text x="2497" y="1765">HIGH</text><text x="2304" y="1947">MID FREQ</text><text x="2499" y="1947">LOW CUT</text><text x="2716.500" y="1765">AMOUNT</text><text x="2925" y="1765">AMBIENCE</text><text x="2925" y="1949">REVERB</text></g>
<use href="#tk" x="1849" y="1845"/><use href="#kk" x="1849" y="1845"/><use href="#kb" transform="translate(1849 1845) rotate(-45)"/>
<use href="#tk" x="2111" y="1844"/><use href="#kk" x="2111" y="1844"/><use href="#kb" transform="translate(2111 1844) rotate(45)"/>
<use href="#tk" x="2304" y="1844"/><use href="#kk" x="2304" y="1844"/><use href="#kb" transform="translate(2304 1844) rotate(-38)"/>
<use href="#tk" x="2497" y="1844"/><use href="#kk" x="2497" y="1844"/><use href="#kb" transform="translate(2497 1844) rotate(6)"/>
<use href="#tk" x="2304" y="2026"/><use href="#kk" x="2304" y="2026"/><use href="#kb" transform="translate(2304 2026) rotate(70)"/>
<use href="#tk" x="2499" y="2026"/><use href="#kk" x="2499" y="2026"/><use href="#kb" transform="translate(2499 2026) rotate(36)"/>
<use href="#tk" x="2716.500" y="1844"/><use href="#kk" x="2716.500" y="1844"/><use href="#kb" transform="translate(2716.500 1844) rotate(-72)"/>
<use href="#tk" x="2925" y="1844"/><use href="#kk" x="2925" y="1844"/><use href="#kb" transform="translate(2925 1844) rotate(-18)"/>
<use href="#tk" x="2925" y="2026"/><use href="#kk" x="2925" y="2026"/><use href="#kb" transform="translate(2925 2026)"/>
<use href="#led" x="1951.500" y="1780"/><use href="#led" x="1951.500" y="1813"/><use href="#led" x="1951.500" y="1845"/><use href="#led" x="1951.500" y="1877"/><use href="#led" x="1951.500" y="1910"/><use href="#led" x="1951.500" y="1942"/><use href="#led" x="1951.500" y="1974"/><use href="#led" x="1951.500" y="2007"/><use href="#led" x="1951.500" y="2039"/><use href="#led" x="1951.500" y="2071"/>
<circle cx="2111" cy="1961" r="13.500" fill="url(#bd)"/>
<use href="#led" x="2716.500" y="1960"/>
<use href="#hex" x="2111" y="2022"/><path d="M2107 2028L2105 2000L2107 1992H2115L2117 2000L2115 2028Z" fill="#777"/><path d="M2108 2000L2111 1990L2114 2000Z" fill="#ddd"/>
<use href="#hex" x="2716.500" y="2022"/><path d="M2712 2020L2710 2050L2713 2058H2720L2723 2050L2721 2020Z" fill="#8a8a8a"/><path d="M2713 2050H2720V2056H2713Z" fill="#ddd"/>
<use href="#scr" x="1700" y="1742"/><use href="#scr" x="1700" y="2052"/><use href="#scr" x="3046" y="1742"/><use href="#scr" x="3046" y="2053"/>
</svg>
</body></html>
